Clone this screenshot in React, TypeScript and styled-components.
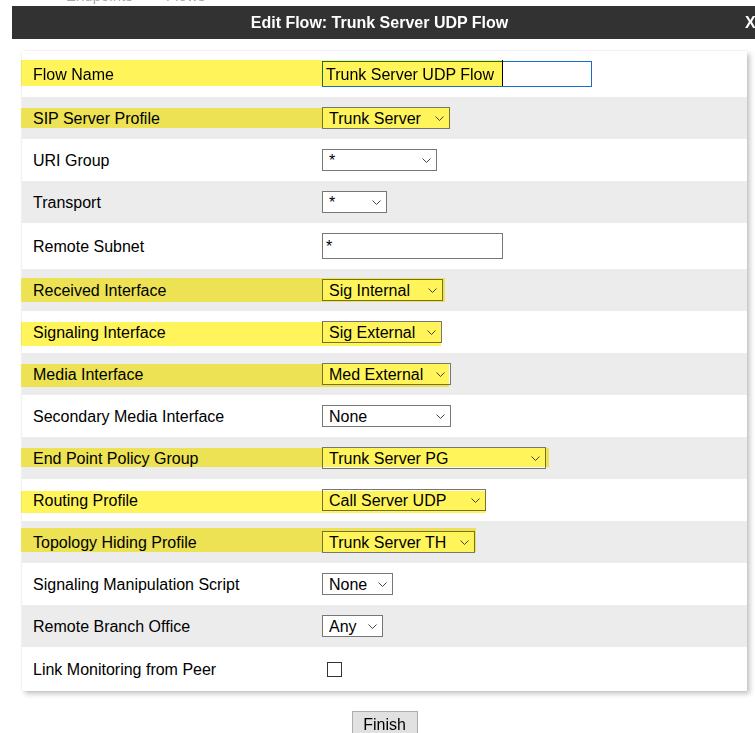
import React from 'react';
import styled, { createGlobalStyle } from 'styled-components';

const GlobalStyle = createGlobalStyle`
  html, body {
    margin: 0;
    padding: 0;
    background: #fff;
  }
  body {
    font-family: "Liberation Sans", Arial, sans-serif;
    font-size: 16px;
    color: #000;
  }
`;

const Page = styled.div`
  width: 755px;
  height: 733px;
  overflow: hidden;
  padding-left: 12px;
  box-sizing: border-box;
`;

// the page behind the dialog, cut off by the header
const BackStrip = styled.div`
  height: 6px;
  overflow: hidden;
  color: #a8a8a8;
  font-size: 15px;
`;

const BackText = styled.div`
  margin-top: -12px;
  line-height: 16px;
  padding-left: 54px;
  white-space: pre;
`;

const Header = styled.div`
  display: grid;
  grid-template-columns: 735px 1fr;
  align-items: center;
  height: 33px;
  background: #323232;
  color: #fff;
  font-weight: bold;
  font-size: 16px;
`;

const Title = styled.div`
  text-align: center;
`;

const Close = styled.div`
  margin-left: -2px;
`;

const Card = styled.div`
  margin: 12px 0 0 10px;
  width: 725px;
  background: #fff;
  box-shadow: 0 0 2px rgba(0, 0, 0, 0.1), 3px 3px 5px rgba(0, 0, 0, 0.22);
`;

const Row = styled.div<{ $shade?: boolean }>`
  position: relative;
  display: grid;
  grid-template-columns: 300px 1fr;
  align-items: center;
  padding: 10px 0;
  background: ${p => (p.$shade ? '#ececec' : '#fff')};
`;

const Label = styled.div`
  padding: 1px 0 0 11px;
  line-height: 21px;
`;

const Value = styled.div<{ $tall?: boolean }>`
  display: flex;
  align-items: center;
  min-height: ${p => (p.$tall ? 24 : 22)}px;
`;

// highlighter stroke drawn over the row
const Marker = styled.span<{ $top: number; $height: number; $width: number; $caret?: boolean }>`
  position: absolute;
  left: -1px;
  top: ${p => p.$top}px;
  height: ${p => p.$height}px;
  width: ${p => p.$width}px;
  background: #fff55a;
  mix-blend-mode: multiply;
  pointer-events: none;
  border-right: ${p => (p.$caret ? '1px solid #000' : 'none')};
  box-sizing: border-box;
`;

const SelectBox = styled.div<{ $width: number }>`
  position: relative;
  width: ${p => p.$width}px;
  height: 22px;
`;

const NativeSelect = styled.select`
  appearance: none;
  -webkit-appearance: none;
  display: block;
  width: 100%;
  height: 100%;
  box-sizing: border-box;
  margin: 0;
  padding: 1px 20px 0 6px;
  border: 1px solid #767676;
  border-radius: 0;
  background: #fff;
  color: #000;
  font: 16px "Liberation Sans", Arial, sans-serif;
  outline: none;
`;

const Chevron = styled.svg`
  position: absolute;
  right: 6px;
  top: 9px;
  width: 9px;
  height: 5px;
  pointer-events: none;
`;

const TextInput = styled.input<{ $width: number; $focused?: boolean }>`
  box-sizing: border-box;
  width: ${p => p.$width}px;
  height: 26px;
  margin: 0;
  padding: 1px 3px 0;
  border: 1px solid ${p => (p.$focused ? '#1a6fc4' : '#767676')};
  border-radius: 0;
  background: #fff;
  color: #000;
  font: 16px "Liberation Sans", Arial, sans-serif;
  outline: none;
`;

const Check = styled.input`
  appearance: none;
  -webkit-appearance: none;
  box-sizing: border-box;
  width: 15px;
  height: 15px;
  margin: 0 0 0 5px;
  border: 1px solid #333;
  border-radius: 0;
  background: #fff;
`;

const Footer = styled.div`
  width: 725px;
  margin: 20px 0 0 10px;
  display: flex;
  justify-content: center;
`;

const FinishButton = styled.button`
  width: 66px;
  height: 26px;
  padding: 2px 0 0;
  border: 1px solid #adadad;
  background: #e1e1e1;
  color: #000;
  font: 16px "Liberation Sans", Arial, sans-serif;
`;

interface SelectProps {
  width: number;
  value: string;
}

const Select = ({ width, value }: SelectProps) => (
  <SelectBox $width={width}>
    <NativeSelect defaultValue={value}>
      <option>{value}</option>
    </NativeSelect>
    <Chevron viewBox="0 0 9 5">
      <polyline points="0.5,0.5 4.5,4.5 8.5,0.5" fill="none" stroke="#444" strokeWidth="1" />
    </Chevron>
  </SelectBox>
);

interface Mark {
  top: number;
  height: number;
  width: number;
  caret?: boolean;
}

interface FieldRow {
  label: string;
  kind: 'select' | 'text' | 'check';
  value?: string;
  width?: number;
  focused?: boolean;
  mark?: Mark;
}

const rows: FieldRow[] = [
  { label: 'Flow Name', kind: 'text', value: 'Trunk Server UDP Flow', width: 270, focused: true, mark: { top: 9, height: 26, width: 482, caret: true } },
  { label: 'SIP Server Profile', kind: 'select', value: 'Trunk Server', width: 128, mark: { top: 11, height: 20, width: 429 } },
  { label: 'URI Group', kind: 'select', value: '*', width: 115 },
  { label: 'Transport', kind: 'select', value: '*', width: 65 },
  { label: 'Remote Subnet', kind: 'text', value: '*', width: 181 },
  { label: 'Received Interface', kind: 'select', value: 'Sig Internal', width: 121, mark: { top: 9, height: 24, width: 424 } },
  { label: 'Signaling Interface', kind: 'select', value: 'Sig External', width: 120, mark: { top: 11, height: 24, width: 420 } },
  { label: 'Media Interface', kind: 'select', value: 'Med External', width: 129, mark: { top: 11, height: 23, width: 428 } },
  { label: 'Secondary Media Interface', kind: 'select', value: 'None', width: 129 },
  { label: 'End Point Policy Group', kind: 'select', value: 'Trunk Server PG', width: 224, mark: { top: 11, height: 19, width: 528 } },
  { label: 'Routing Profile', kind: 'select', value: 'Call Server UDP', width: 164, mark: { top: 12, height: 22, width: 465 } },
  { label: 'Topology Hiding Profile', kind: 'select', value: 'Trunk Server TH', width: 153, mark: { top: 7, height: 24, width: 455 } },
  { label: 'Signaling Manipulation Script', kind: 'select', value: 'None', width: 71 },
  { label: 'Remote Branch Office', kind: 'select', value: 'Any', width: 61 },
  { label: 'Link Monitoring from Peer', kind: 'check' },
];

const App = () => (
  <Page>
    <GlobalStyle />
    <BackStrip>
      <BackText>{'Endpoints        Flows'}</BackText>
    </BackStrip>
    <Header>
      <Title>Edit Flow: Trunk Server UDP Flow</Title>
      <Close>X</Close>
    </Header>
    <Card>
      {rows.map((r, i) => (
        <Row key={r.label} $shade={i % 2 === 1}>
          <Label>{r.label}</Label>
          <Value $tall={r.kind === 'check'}>
            {r.kind === 'select' && <Select width={r.width!} value={r.value!} />}
            {r.kind === 'text' && (
              <TextInput type="text" $width={r.width!} $focused={r.focused} defaultValue={r.value} />
            )}
            {r.kind === 'check' && <Check type="checkbox" />}
          </Value>
          {r.mark && (
            <Marker $top={r.mark.top} $height={r.mark.height} $width={r.mark.width} $caret={r.mark.caret} />
          )}
        </Row>
      ))}
    </Card>
    <Footer>
      <FinishButton>Finish</FinishButton>
    </Footer>
  </Page>
);

export default App;
